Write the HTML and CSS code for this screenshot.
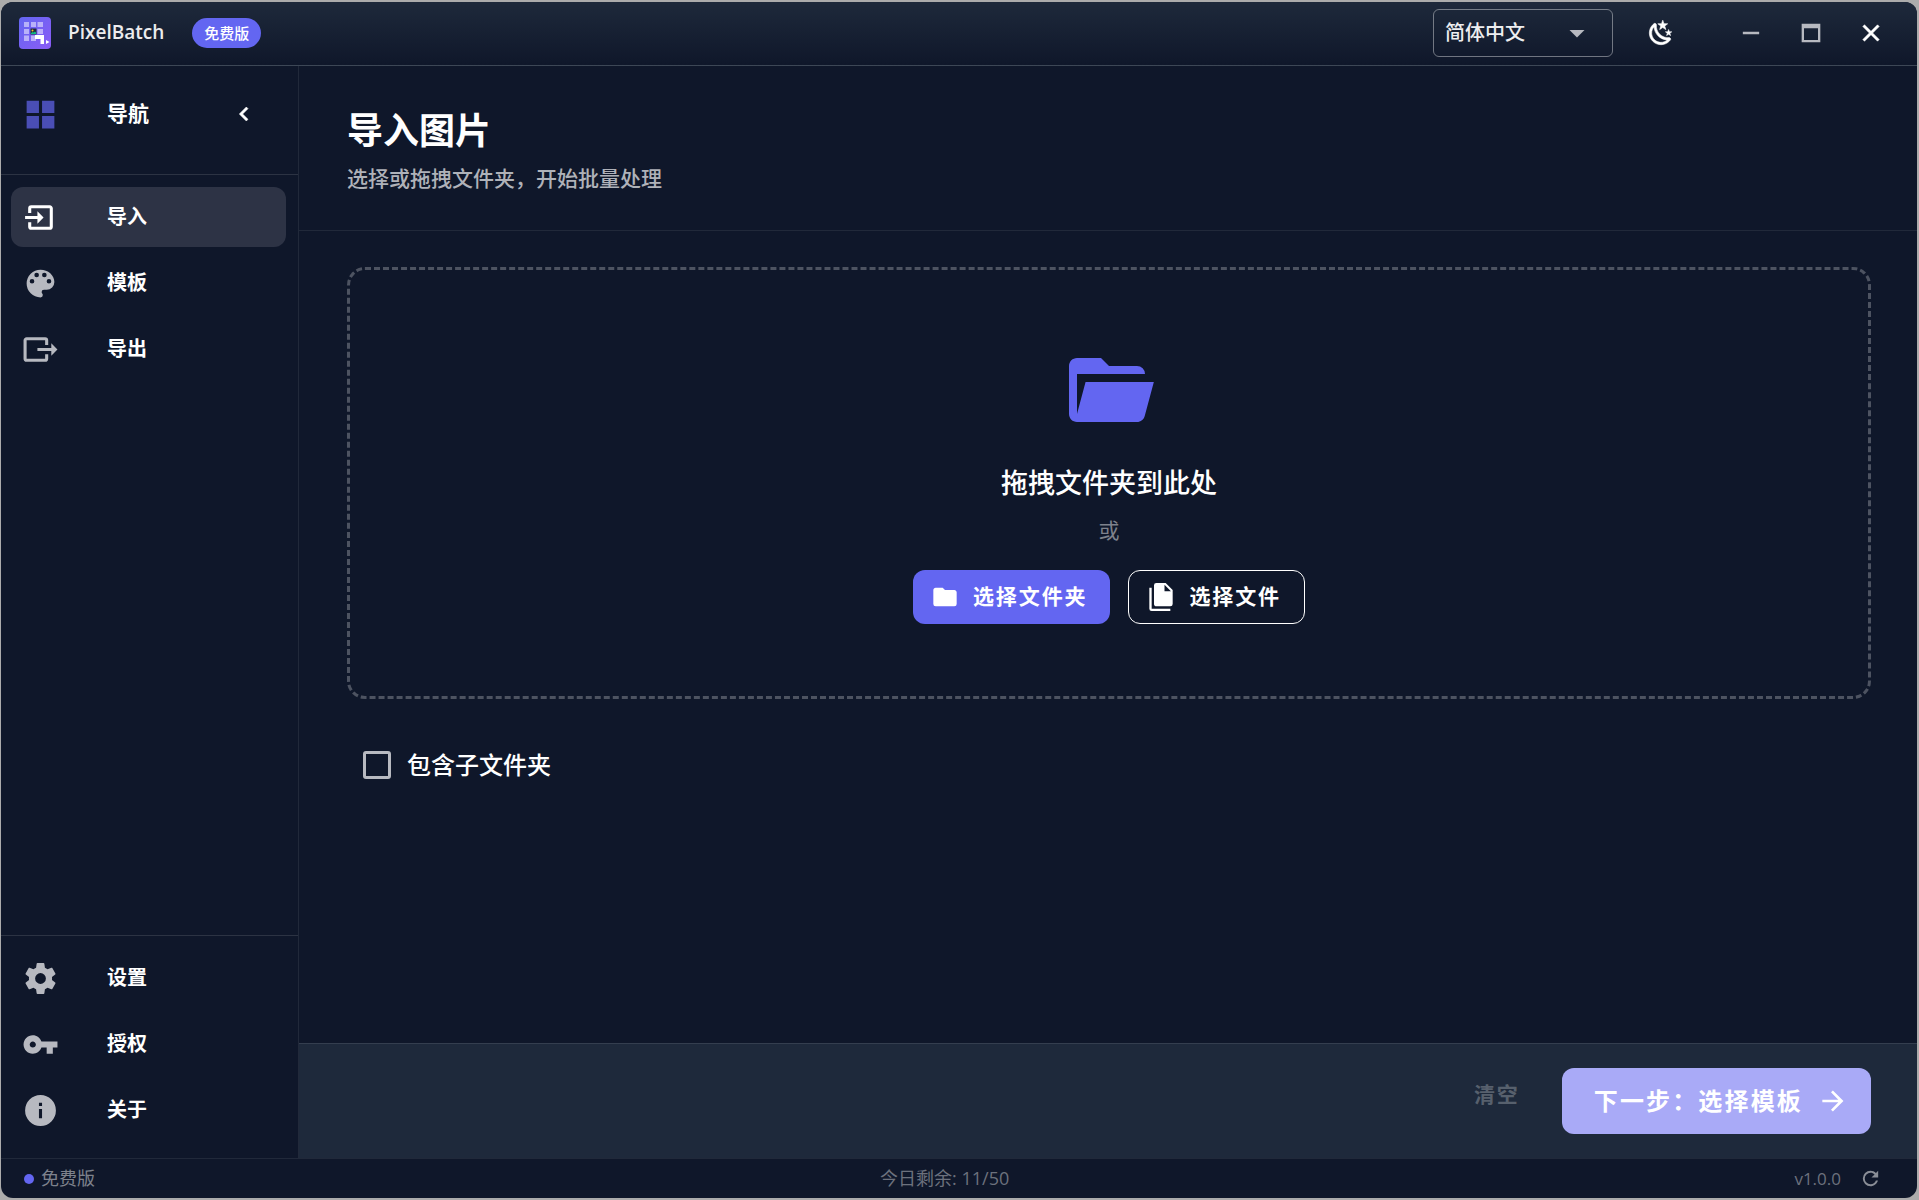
FILE: index.html
```html
<!DOCTYPE html>
<html lang="zh-CN">
<head>
    <meta charset="utf-8" />
    <meta name="viewport" content="width=device-width, initial-scale=1" />
    <title>PixelBatch</title>
    <link rel="stylesheet" href="styles.css">
</head>
<body>
    <div class="window">
        <header class="titlebar">
            <svg class="logo" viewBox="0 0 32 32">
                <defs>
                    <linearGradient id="logo-bg" x1="0" y1="0" x2="1" y2="1">
                        <stop offset="0" stop-color="#6366f1" />
                        <stop offset="1" stop-color="#8b5cf6" />
                    </linearGradient>
                </defs>
                <rect width="32" height="32" rx="4" fill="url(#logo-bg)" />
                <path fill="#fff" fill-opacity=".5" d="M5 5h5v5H5zM12 5h5v5h-5zM18.500 5H24v5h-5.500zM5 12h5v5H5zM18.500 12H24v5h-5.500zM5 18.500h5V24H5zM12 18.500h5V24h-5z" />
                <path fill="#1e293b" d="M11.500 11.500h6v6h-6z" />
                <circle cx="13.500" cy="13.500" r="1" fill="#fbbf24" />
                <path fill="#10b981" d="M12 17v-1l1.500-1 1 .500 1.500-1 1 1V17z" />
                <path fill="#fff" d="M16 18h9v9h-3.500v-5H16zM27 23l3.500 2-3.500 2z" />
            </svg>
            <span class="app-name">PixelBatch</span>
            <span class="badge">免费版</span>
            <div class="titlebar-actions">
                <div class="lang">
                    <select class="lang-select" aria-label="语言">
                        <option>简体中文</option>
                        <option>English</option>
                    </select>
                    <svg class="lang-arrow" viewBox="0 0 24 24"><path d="M7,10L12,15L17,10H7Z" /></svg>
                </div>
                <button class="icon-btn theme-btn" type="button" aria-label="切换主题">
                    <svg viewBox="0 0 24 24"><path d="M17.75,4.09L15.22,6.03L16.13,9.09L13.5,7.28L10.87,9.09L11.78,6.03L9.25,4.09L12.44,4L13.5,1L14.56,4L17.75,4.09M21.25,11L19.61,12.25L20.2,14.23L18.5,13.06L16.8,14.23L17.39,12.25L15.75,11L17.81,10.95L18.5,9L19.19,10.95L21.25,11M18.97,15.95C19.8,15.87 20.69,17.05 20.16,17.8C19.84,18.25 19.5,18.67 19.08,19.07C15.17,23 8.84,23 4.94,19.07C1.03,15.17 1.03,8.83 4.94,4.93C5.34,4.53 5.76,4.17 6.21,3.85C6.96,3.32 8.14,4.21 8.06,5.04C7.79,7.9 8.75,10.87 10.95,13.06C13.14,15.26 16.1,16.22 18.97,15.95M17.33,17.97C14.5,17.81 11.7,16.64 9.53,14.5C7.36,12.31 6.2,9.5 6.04,6.68C3.23,9.82 3.34,14.64 6.35,17.66C9.37,20.67 14.19,20.78 17.33,17.97Z" /></svg>
                </button>
                <div class="window-controls">
                    <button class="icon-btn dim" type="button" aria-label="最小化">
                        <svg viewBox="0 0 24 24"><path d="M5,11H19V13H5V11Z" /></svg>
                    </button>
                    <button class="icon-btn dim" type="button" aria-label="最大化">
                        <svg viewBox="0 0 24 24"><path d="M4,4H20V20H4V4M6,8V18H18V8H6Z" /></svg>
                    </button>
                    <button class="icon-btn close-btn" type="button" aria-label="关闭">
                        <svg viewBox="0 0 24 24"><path d="M19,6.41L17.59,5L12,10.59L6.41,5L5,6.41L10.59,12L5,17.59L6.41,19L12,13.41L17.59,19L19,17.59L13.41,12L19,6.41Z" /></svg>
                    </button>
                </div>
            </div>
        </header>

        <div class="body">
            <aside class="sidebar">
                <div class="nav-header">
                    <svg class="nav-icon" viewBox="0 0 24 24"><path d="M3,11H11V3H3M3,21H11V13H3M13,21H21V13H13M13,3V11H21V3" /></svg>
                    <span class="nav-title">导航</span>
                    <button class="icon-btn collapse-btn" type="button" aria-label="收起">
                        <svg viewBox="0 0 24 24"><path d="M15.41,16.58L10.83,12L15.41,7.41L14,6L8,12L14,18L15.41,16.58Z" /></svg>
                    </button>
                </div>
                <nav class="nav-list">
                    <a class="nav-item active" href="#import">
                        <svg class="nav-icon" viewBox="0 0 24 24"><path d="M14,12L10,8V11H2V13H10V16M20,18V6C20,4.89 19.1,4 18,4H6A2,2 0 0,0 4,6V9H6V6H18V18H6V15H4V18A2,2 0 0,0 6,20H18A2,2 0 0,0 20,18Z" /></svg>
                        <span>导入</span>
                    </a>
                    <a class="nav-item" href="#template">
                        <svg class="nav-icon" viewBox="0 0 24 24"><path d="M17.5,12A1.5,1.5 0 0,1 16,10.5A1.5,1.5 0 0,1 17.5,9A1.5,1.5 0 0,1 19,10.5A1.5,1.5 0 0,1 17.5,12M14.5,8A1.5,1.5 0 0,1 13,6.5A1.5,1.5 0 0,1 14.5,5A1.5,1.5 0 0,1 16,6.5A1.5,1.5 0 0,1 14.5,8M9.5,8A1.5,1.5 0 0,1 8,6.5A1.5,1.5 0 0,1 9.5,5A1.5,1.5 0 0,1 11,6.5A1.5,1.5 0 0,1 9.5,8M6.5,12A1.5,1.5 0 0,1 5,10.5A1.5,1.5 0 0,1 6.5,9A1.5,1.5 0 0,1 8,10.5A1.5,1.5 0 0,1 6.5,12M12,3A9,9 0 0,0 3,12A9,9 0 0,0 12,21A1.5,1.5 0 0,0 13.5,19.5C13.5,19.11 13.35,18.76 13.11,18.5C12.88,18.23 12.73,17.88 12.73,17.5A1.5,1.5 0 0,1 14.23,16H16A5,5 0 0,0 21,11C21,6.58 16.97,3 12,3Z" /></svg>
                        <span>模板</span>
                    </a>
                    <a class="nav-item" href="#export">
                        <svg class="nav-icon" viewBox="0 0 24 24"><path d="M23,12L19,8V11H10V13H19V16M1,18V6C1,4.89 1.9,4 3,4H15A2,2 0 0,1 17,6V9H15V6H3V18H15V15H17V18A2,2 0 0,1 15,20H3A2,2 0 0,1 1,18Z" /></svg>
                        <span>导出</span>
                    </a>
                </nav>
                <nav class="nav-list nav-bottom">
                    <a class="nav-item" href="#settings">
                        <svg class="nav-icon" viewBox="0 0 24 24"><path d="M12,15.5A3.5,3.5 0 0,1 8.5,12A3.5,3.5 0 0,1 12,8.5A3.5,3.5 0 0,1 15.5,12A3.5,3.5 0 0,1 12,15.5M19.43,12.97C19.47,12.65 19.5,12.33 19.5,12C19.5,11.67 19.47,11.34 19.43,11L21.54,9.37C21.73,9.22 21.78,8.95 21.66,8.73L19.66,5.27C19.54,5.05 19.27,4.96 19.05,5.05L16.56,6.05C16.04,5.66 15.5,5.32 14.87,5.07L14.5,2.42C14.46,2.18 14.25,2 14,2H10C9.75,2 9.54,2.18 9.5,2.42L9.13,5.07C8.5,5.32 7.96,5.66 7.44,6.05L4.95,5.05C4.73,4.96 4.46,5.05 4.34,5.27L2.34,8.73C2.21,8.95 2.27,9.22 2.46,9.37L4.57,11C4.53,11.34 4.5,11.67 4.5,12C4.5,12.33 4.53,12.65 4.57,12.97L2.46,14.63C2.27,14.78 2.21,15.05 2.34,15.27L4.34,18.73C4.46,18.95 4.73,19.03 4.95,18.95L7.44,17.94C7.96,18.34 8.5,18.68 9.13,18.93L9.5,21.58C9.54,21.82 9.75,22 10,22H14C14.25,22 14.46,21.82 14.5,21.58L14.87,18.93C15.5,18.67 16.04,18.34 16.56,17.94L19.05,18.95C19.27,19.03 19.54,18.95 19.66,18.73L21.66,15.27C21.78,15.05 21.73,14.78 21.54,14.63L19.43,12.97Z" /></svg>
                        <span>设置</span>
                    </a>
                    <a class="nav-item" href="#license">
                        <svg class="nav-icon" viewBox="0 0 24 24"><path d="M7 14C5.9 14 5 13.1 5 12S5.900 10 7 10 9 10.900 9 12 8.100 14 7 14M12.600 10C11.800 7.700 9.600 6 7 6C3.700 6 1 8.700 1 12S3.700 18 7 18C9.600 18 11.800 16.300 12.600 14H16V18H20V14H23V10H12.600Z" /></svg>
                        <span>授权</span>
                    </a>
                    <a class="nav-item" href="#about">
                        <svg class="nav-icon" viewBox="0 0 24 24"><path d="M13,9H11V7H13M13,17H11V11H13M12,2A10,10 0 0,0 2,12A10,10 0 0,0 12,22A10,10 0 0,0 22,12A10,10 0 0,0 12,2Z" /></svg>
                        <span>关于</span>
                    </a>
                </nav>
            </aside>

            <main class="main">
                <div class="page-header">
                    <h1>导入图片</h1>
                    <p>选择或拖拽文件夹，开始批量处理</p>
                </div>

                <div class="page-content">
                    <section class="dropzone">
                        <svg class="drop-icon" viewBox="0 0 24 24"><path d="M19,20H4C2.89,20 2,19.1 2,18V6C2,4.89 2.89,4 4,4H10L12,6H19A2,2 0 0,1 21,8H21L4,8V18L6.14,10H23.21L20.93,18.5C20.7,19.37 19.92,20 19,20Z" /></svg>
                        <h2>拖拽文件夹到此处</h2>
                        <p>或</p>
                        <div class="drop-buttons">
                            <button class="btn btn-primary" type="button">
                                <svg viewBox="0 0 24 24"><path d="M10,4H4C2.89,4 2,4.89 2,6V18A2,2 0 0,0 4,20H20A2,2 0 0,0 22,18V8C22,6.89 21.1,6 20,6H12L10,4Z" /></svg>
                                选择文件夹
                            </button>
                            <button class="btn btn-outlined" type="button">
                                <svg viewBox="0 0 24 24"><path d="M15,7H20.5L15,1.5V7M8,0H16L22,6V18A2,2 0 0,1 20,20H8C6.89,20 6,19.1 6,18V2A2,2 0 0,1 8,0M4,4V22H20V24H4A2,2 0 0,1 2,22V4H4Z" /></svg>
                                选择文件
                            </button>
                        </div>
                    </section>

                    <label class="checkbox">
                        <input type="checkbox">
                        <span>包含子文件夹</span>
                    </label>
                </div>

                <div class="action-bar">
                    <button class="btn btn-text" type="button" disabled>清空</button>
                    <button class="btn btn-next" type="button" disabled>
                        下一步：选择模板
                        <svg viewBox="0 0 24 24"><path d="M4,11V13H16L10.5,18.5L11.92,19.92L19.84,12L11.92,4.08L10.5,5.5L16,11H4Z" /></svg>
                    </button>
                </div>
            </main>
        </div>

        <footer class="statusbar">
            <div class="status-plan"><span class="dot"></span>免费版</div>
            <div>今日剩余: 11/50</div>
            <div class="status-version">
                v1.0.0
                <button class="icon-btn refresh-btn" type="button" aria-label="检查更新">
                    <svg viewBox="0 0 24 24"><path d="M17.65,6.35C16.2,4.9 14.21,4 12,4A8,8 0 0,0 4,12A8,8 0 0,0 12,20C15.73,20 18.84,17.45 19.73,14H17.65C16.83,16.33 14.61,18 12,18A6,6 0 0,1 6,12A6,6 0 0,1 12,6C13.66,6 15.14,6.69 16.22,7.78L13,11H20V4L17.65,6.35Z" /></svg>
                </button>
            </div>
        </footer>
    </div>
</body>
</html>
```
FILE: styles.css
```css
* {
    margin: 0;
    padding: 0;
    box-sizing: border-box;
}

body {
    height: 100vh;
    padding: 2px 2px 2px 1px;
    background: #acacac;
    font-family: "Open Sans", "Noto Sans CJK SC", sans-serif;
    color: #fff;
    line-height: 1.5;
}

svg {
    display: block;
    flex-shrink: 0;
    fill: currentColor;
}

button,
select,
input {
    font: inherit;
    color: inherit;
}

.window {
    height: 100%;
    display: flex;
    flex-direction: column;
    background: #0f172a;
    border-radius: 12px;
    overflow: hidden;
}

/* Title bar */
.titlebar {
    height: 64px;
    display: flex;
    align-items: center;
    padding: 0 22px 2px 18px;
    background: linear-gradient(180deg, #1e293b 0%, #0f172a 100%);
    border-bottom: 1px solid rgba(255, 255, 255, 0.14);
}

.logo {
    width: 32px;
    height: 32px;
}

.app-name {
    margin-left: 17px;
    font-size: 19px;
    font-weight: 600;
    color: #ececee;
}

.badge {
    margin-left: 28px;
    height: 30px;
    padding: 0 12px;
    border-radius: 15px;
    background: #6366f1;
    font-size: 15px;
    line-height: 30px;
    font-weight: 500;
}

.titlebar-actions {
    margin-left: auto;
    display: flex;
    align-items: center;
}

.lang {
    position: relative;
}

.lang-select {
    width: 180px;
    height: 48px;
    padding: 0 11px;
    appearance: none;
    background: transparent;
    border: 1px solid rgba(255, 255, 255, 0.4);
    border-radius: 6px;
    font-size: 20px;
    font-weight: 500;
    color: #eeeef0;
}

.lang-arrow {
    position: absolute;
    top: 6px;
    right: 18px;
    width: 36px;
    height: 36px;
    color: #b7b9c0;
    pointer-events: none;
}

.icon-btn {
    width: 48px;
    height: 48px;
    display: flex;
    align-items: center;
    justify-content: center;
    background: none;
    border: none;
    border-radius: 50%;
    cursor: pointer;
}

.icon-btn svg {
    width: 28px;
    height: 28px;
}

.icon-btn:hover {
    background: rgba(255, 255, 255, 0.08);
}

.dim {
    color: #b7b9c0;
}

.theme-btn {
    margin-left: 24px;
}

.theme-btn svg,
.close-btn svg,
.collapse-btn svg {
    stroke: currentColor;
    stroke-width: 0.5;
}

.window-controls {
    margin-left: 42px;
    display: flex;
    gap: 12px;
}

/* Layout */
.body {
    flex: 1;
    display: flex;
    min-height: 0;
}

.sidebar {
    width: 298px;
    flex-shrink: 0;
    display: flex;
    flex-direction: column;
    border-right: 1px solid rgba(255, 255, 255, 0.08);
}

.nav-header {
    height: 109px;
    display: flex;
    align-items: center;
    padding: 0 30px 12px 21px;
    border-bottom: 1px solid rgba(255, 255, 255, 0.12);
}

.nav-header .nav-icon {
    color: #4a4eb5;
}

.nav-icon {
    width: 37px;
    height: 37px;
    color: #b7b9c0;
}

.nav-title {
    margin-left: 48px;
    font-size: 21px;
    font-weight: 600;
}

.collapse-btn {
    margin-left: auto;
}

.nav-list {
    display: flex;
    flex-direction: column;
    gap: 6px;
    padding: 12px 12px 12px 10px;
}

.nav-bottom {
    margin-top: auto;
    padding-bottom: 18px;
    border-top: 1px solid rgba(255, 255, 255, 0.12);
}

.nav-item {
    height: 60px;
    display: flex;
    align-items: center;
    gap: 48px;
    padding: 0 11px;
    border-radius: 12px;
    font-size: 20px;
    font-weight: 600;
    color: #fff;
    text-decoration: none;
}

.nav-item:hover {
    background: rgba(255, 255, 255, 0.06);
}

.nav-item.active {
    background: #2d3345;
}

.nav-item.active .nav-icon {
    color: #fff;
}

/* Page */
.main {
    flex: 1;
    min-width: 0;
    display: flex;
    flex-direction: column;
}

.page-header {
    padding: 38px 46px 36px 48px;
    border-bottom: 1px solid rgba(255, 255, 255, 0.08);
}

.page-header h1 {
    font-size: 36px;
    line-height: 54px;
    font-weight: 700;
}

.page-header p {
    margin-top: 4px;
    font-size: 21px;
    line-height: 32px;
    font-weight: 500;
    color: #afb2b9;
}

.page-content {
    flex: 1;
    padding: 36px 46px 36px 48px;
}

.dropzone {
    display: flex;
    flex-direction: column;
    align-items: center;
    padding: 72px 48px;
    border: 3px dashed #4d5361;
    border-radius: 18px;
}

.drop-icon {
    width: 96px;
    height: 96px;
    color: #6366f1;
}

.dropzone h2 {
    margin-top: 24px;
    font-size: 27px;
    line-height: 42px;
    font-weight: 500;
}

.dropzone p {
    margin-top: 10px;
    font-size: 21px;
    line-height: 32px;
    color: #7e828c;
}

.drop-buttons {
    margin-top: 24px;
    display: flex;
    gap: 18px;
}

.btn {
    height: 54px;
    display: flex;
    align-items: center;
    gap: 14px;
    border: none;
    border-radius: 12px;
    background: none;
    font-size: 21px;
    font-weight: 600;
    letter-spacing: 0.09em;
    cursor: pointer;
}

.btn:disabled {
    cursor: default;
}

.btn svg {
    width: 28px;
    height: 28px;
}

.btn-primary {
    padding: 0 23px 0 18px;
    background: #6366f1;
}

.btn-outlined {
    padding: 0 23px 0 18px;
    border: 1px solid #fff;
}

.checkbox {
    display: inline-flex;
    align-items: center;
    gap: 16px;
    margin: 48px 0 0 16px;
    font-size: 24px;
    font-weight: 500;
    cursor: pointer;
}

.checkbox input {
    width: 28px;
    height: 28px;
    appearance: none;
    border: 3px solid #b7b9c0;
    border-radius: 3px;
}

.checkbox input:checked {
    background: #6366f1;
    border-color: #6366f1;
}

.action-bar {
    display: flex;
    align-items: flex-start;
    justify-content: flex-end;
    gap: 18px;
    padding: 24px 46px 24px 48px;
    background: #1e293b;
    border-top: 1px solid rgba(255, 255, 255, 0.1);
}

.btn-text {
    padding: 0 24px;
    color: #57606d;
}

.btn-next {
    height: 66px;
    padding: 0 22px 0 32px;
    background: #a9aaf7;
    color: #fff;
    font-size: 24px;
}

.btn-next svg {
    width: 32px;
    height: 32px;
}

/* Status bar */
.statusbar {
    height: 40px;
    display: flex;
    align-items: center;
    justify-content: space-between;
    padding: 0 35px 0 23px;
    border-top: 1px solid rgba(255, 255, 255, 0.08);
    font-size: 18px;
    color: #6c717d;
}

.status-plan {
    display: flex;
    align-items: center;
    gap: 7px;
    color: #7e828c;
}

.dot {
    width: 10px;
    height: 10px;
    border-radius: 50%;
    background: #6366f1;
}

.status-version {
    display: flex;
    align-items: center;
    gap: 18px;
    font-size: 17px;
}

.refresh-btn {
    width: 23px;
    height: 23px;
    color: #8a8e97;
}

.refresh-btn svg {
    width: 23px;
    height: 23px;
}
```
